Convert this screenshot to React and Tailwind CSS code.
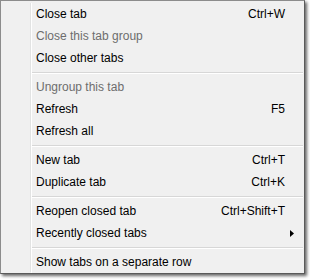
import React from "react";

const groups = [
  [
    { label: "Close tab", sc: "Ctrl+W" },
    { label: "Close this tab group", disabled: true },
    { label: "Close other tabs" },
  ],
  [
    { label: "Ungroup this tab", disabled: true },
    { label: "Refresh", sc: "F5" },
    { label: "Refresh all" },
  ],
  [
    { label: "New tab", sc: "Ctrl+T" },
    { label: "Duplicate tab", sc: "Ctrl+K" },
  ],
  [
    { label: "Reopen closed tab", sc: "Ctrl+Shift+T" },
    { label: "Recently closed tabs", sub: true },
  ],
  [{ label: "Show tabs on a separate row" }],
];

function Row({ item }) {
  return (
    <div
      className={`flex items-center h-[22px] pl-[4px] text-[12px] leading-[22px] ${
        item.disabled ? "text-[#6d6d6d]" : "text-black"
      }`}
    >
      <span className="flex-1 whitespace-nowrap">{item.label}</span>
      {item.sc && <span className="whitespace-nowrap">{item.sc}</span>}
      <div className="w-[19px] h-full flex items-center pl-[5px]">
        {item.sub && (
          <svg width="4" height="7" viewBox="0 0 4 7">
            <path d="M0 0 L4 3.5 L0 7 Z" fill="#000" />
          </svg>
        )}
      </div>
    </div>
  );
}

export default function App() {
  return (
    <div
      className="w-[310px] h-[280px] bg-white"
      style={{ fontFamily: '"Liberation Sans", Arial, sans-serif' }}
    >
      <div className="w-[305px] h-[274px] border border-[#8c8c8c] border-r-[#5a5a5a] border-b-[#5a5a5a] bg-[#f0f0f0] shadow-[2px_2px_3px_rgba(0,0,0,0.6)] pt-[2px] pb-[1px] flex">
        <div className="w-[29px] shrink-0" />
        <div className="flex-1 border-l border-l-[#e2e3e3] flex flex-col">
          <div className="flex-1 border-l border-l-white flex flex-col">
            {groups.map((g, gi) => (
              <React.Fragment key={gi}>
                {gi > 0 && (
                  <div className="h-[7px] pt-[3px] pr-[1px]">
                    <div className="h-[1px] bg-[#d7d7d7]" />
                    <div className="h-[1px] bg-white" />
                  </div>
                )}
                {g.map((it, i) => (
                  <Row key={i} item={it} />
                ))}
              </React.Fragment>
            ))}
          </div>
        </div>
      </div>
    </div>
  );
}
